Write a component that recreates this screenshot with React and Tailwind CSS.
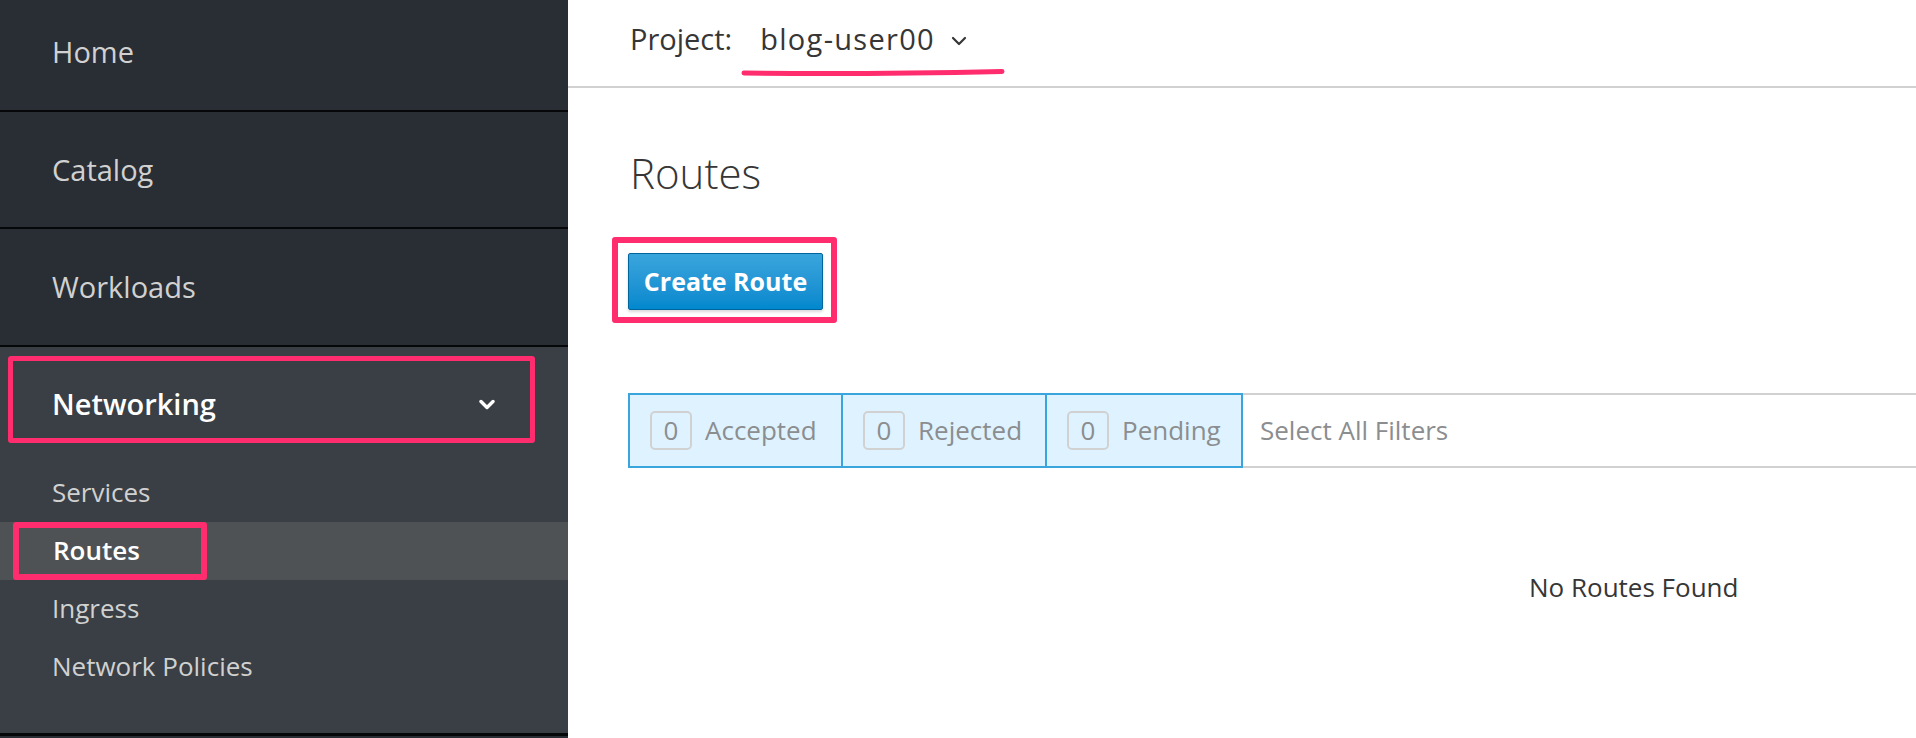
import React from "react";

const topItems = ["Home", "Catalog", "Workloads"];

const Sidebar = () => {
  return (
    <aside className="flex w-[568px] shrink-0 flex-col bg-[#292e34]">
      {topItems.map((label, i) => (
        <div
          key={label}
          className={`flex h-[117.5px] shrink-0 items-center border-b-2 border-[#050708] pl-[52px] text-[29px] text-[#d1d1d1] ${i === 0 ? "-mt-[6px]" : ""}`}
        >
          {label}
        </div>
      ))}

      {/* expanded networking group */}
      <div className="flex h-[389.5px] shrink-0 flex-col border-b-[3px] border-[#050708] bg-[#393f44] pt-[9px]">
        <div className="ml-[8px] flex h-[87px] w-[527px] items-center justify-between rounded-[3px] border-[5px] border-[#ff2d6e] pl-[39px] pr-[35px] pt-[10px] text-[29px] font-semibold text-white">
          <span>Networking</span>
          <svg width="16" height="11" viewBox="0 0 16 11" fill="none">
            <path d="M2 2.5 L8 8.5 L14 2.5" stroke="#fff" strokeWidth="3.4" strokeLinecap="round" strokeLinejoin="round" />
          </svg>
        </div>

        <ul className="mt-[21px] text-[26px] text-[#d1d1d1]">
          <li className="flex h-[58px] items-center pl-[52px]">Services</li>
          <li className="flex h-[58px] items-stretch bg-[#4f5255] pl-[13px]">
            <div className="flex w-[194px] items-center rounded-[3px] border-[6px] border-[#ff2d6e] pl-[34px] font-semibold text-white">
              Routes
            </div>
          </li>
          <li className="flex h-[58px] items-center pl-[52px]">Ingress</li>
          <li className="flex h-[58px] items-center pl-[52px]">Network Policies</li>
        </ul>
      </div>
    </aside>
  );
};

const filters = [
  { label: "Accepted", w: "w-[211px]", first: true },
  { label: "Rejected", w: "w-[204px]" },
  { label: "Pending", w: "w-[196px]" },
];

const Main = () => {
  return (
    <main className="flex min-w-0 flex-1 flex-col text-[#363636]">
      <header className="relative flex h-[88px] shrink-0 items-center border-b-2 border-[#d1d1d1] pb-[8px] pl-[62px] text-[29px]">
        <span>Project:</span>
        <span className="ml-[28px] tracking-[1.3px]">blog-user00</span>
        <svg className="ml-[16px] mt-[4px]" width="16" height="10" viewBox="0 0 16 10" fill="none">
          <path d="M2 2 L8 8 L14 2" stroke="#363636" strokeWidth="2.2" strokeLinecap="round" strokeLinejoin="round" />
        </svg>
        {/* hand drawn underline annotation */}
        <svg className="absolute left-[172px] top-[67px]" width="266" height="10" viewBox="0 0 266 10" fill="none">
          <path d="M4 6 Q 120 7.5 262 4.5" stroke="#ff2d6e" strokeWidth="5" strokeLinecap="round" />
        </svg>
      </header>

      <div className="flex flex-col pl-[60px]">
        <h1 className="ml-[2px] mt-[53px] text-[42px] font-light text-[#363636]">Routes</h1>

        <div className="-ml-[16px] mt-[33px] w-fit rounded-[3px] border-[6px] border-[#ff2d6e] pb-[7px] pl-[10px] pr-[8px] pt-[10px]">
          <button className="h-[57px] w-[195px] rounded-[2px] border border-[#00659c] bg-gradient-to-b from-[#39a5dc] to-[#0088ce] text-[25px] font-bold text-white shadow-[0_2px_3px_rgba(0,0,0,0.15)]">
            Create Route
          </button>
        </div>

        <div className="mt-[70px] flex h-[75px] items-stretch">
          <div className="flex border-2 border-[#39a5dc] bg-[#def3ff]">
            {filters.map((f) => (
              <div
                key={f.label}
                className={`flex ${f.w} items-center gap-[13px] pl-[20px] text-[26px] text-[#8b8d8f] ${f.first ? "" : "border-l-2 border-[#39a5dc]"}`}
              >
                <span className="flex h-[39px] w-[42px] items-center justify-center rounded-[5px] border-2 border-[#d1d1d1]">0</span>
                <span>{f.label}</span>
              </div>
            ))}
          </div>
          <div className="flex flex-1 items-center border-y-2 border-[#d1d1d1] pl-[17px] text-[26px] text-[#8b8d8f]">
            Select All Filters
          </div>
        </div>

        <p className="mt-[100px] pl-[901px] text-[26px] text-[#363636]">No Routes Found</p>
      </div>
    </main>
  );
};

const App = () => {
  return (
    <div className="flex h-[738px] w-[1916px] overflow-hidden bg-white font-['Open_Sans',sans-serif]">
      <Sidebar />
      <Main />
    </div>
  );
};

export default App;
